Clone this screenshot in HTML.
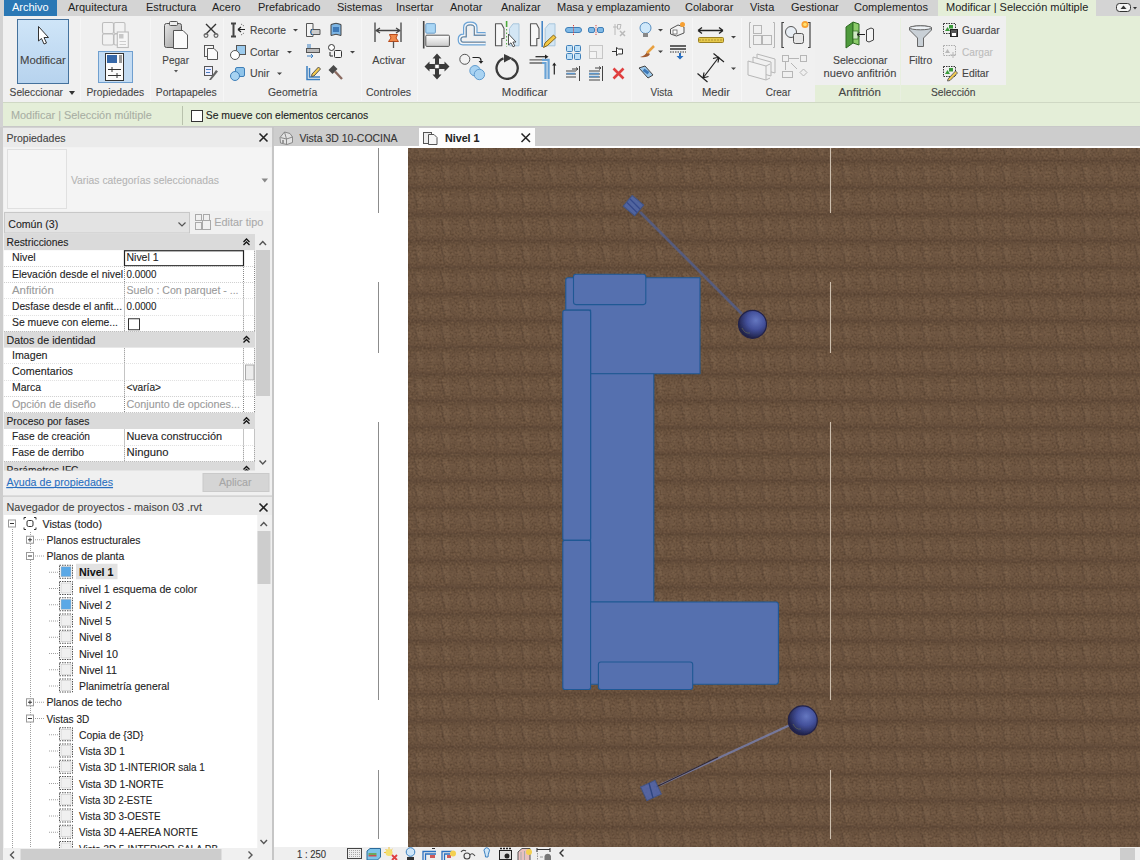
<!DOCTYPE html>
<html><head><meta charset="utf-8">
<style>
*{margin:0;padding:0;box-sizing:border-box}
html,body{width:1140px;height:860px;overflow:hidden;background:#d2d2d2;font-family:"Liberation Sans",sans-serif;font-size:11px;color:#222}
.a{position:absolute}
.t{position:absolute;white-space:nowrap;line-height:13px}
svg{position:absolute;overflow:visible}
</style></head><body>

<!-- ===== TAB BAR ===== -->
<div class="a" style="left:0;top:0;width:1140px;height:16px;background:#d4d4d4"></div>
<div class="a" style="left:4px;top:0;width:53px;height:16px;background:#2a78b5"></div>
<div class="t" style="left:12px;top:1px;color:#fff">Archivo</div>
<div class="t" style="left:68px;top:1px">Arquitectura</div>
<div class="t" style="left:146px;top:1px">Estructura</div>
<div class="t" style="left:212px;top:1px">Acero</div>
<div class="t" style="left:258px;top:1px">Prefabricado</div>
<div class="t" style="left:337px;top:1px">Sistemas</div>
<div class="t" style="left:396px;top:1px">Insertar</div>
<div class="t" style="left:450px;top:1px">Anotar</div>
<div class="t" style="left:501px;top:1px">Analizar</div>
<div class="t" style="left:557px;top:1px">Masa y emplazamiento</div>
<div class="t" style="left:685px;top:1px">Colaborar</div>
<div class="t" style="left:750px;top:1px">Vista</div>
<div class="t" style="left:791px;top:1px">Gestionar</div>
<div class="t" style="left:854px;top:1px">Complementos</div>
<div class="a" style="left:938px;top:0;width:158px;height:17px;background:#e4eed8"></div>
<div class="t" style="left:946px;top:1px">Modificar | Selección múltiple</div>

<!-- ===== RIBBON ===== -->
<div id="ribbon" class="a" style="left:3px;top:16px;width:1137px;height:86px;background:#f0f0f0"></div>
<div class="a" style="left:815px;top:16px;width:325px;height:86px;background:#e4eed8"></div>

<!-- ===== OPTIONS BAR ===== -->
<div class="a" style="left:3px;top:102px;width:1137px;height:25px;background:#e4eed8;border-top:1px solid #cfd8c4;border-bottom:1px solid #c8c8c8"></div>


<!-- ribbon svg -->
<svg class="a" style="left:0;top:0" width="1140" height="128" viewBox="0 0 1140 128" font-family="Liberation Sans" font-size="11">
<defs>
 <linearGradient id="gBtn" x1="0" y1="0" x2="0" y2="1"><stop offset="0" stop-color="#cfe5f8"/><stop offset="1" stop-color="#b7d3ee"/></linearGradient>
 <linearGradient id="gGrey" x1="0" y1="0" x2="0" y2="1"><stop offset="0" stop-color="#ffffff"/><stop offset="1" stop-color="#c8c8c8"/></linearGradient>
 <linearGradient id="gBlue" x1="0" y1="0" x2="0" y2="1"><stop offset="0" stop-color="#bfe0f7"/><stop offset="1" stop-color="#6fb3e0"/></linearGradient>
 <linearGradient id="gGreen" x1="0" y1="0" x2="1" y2="0"><stop offset="0" stop-color="#4f9a3a"/><stop offset="1" stop-color="#8fcf6a"/></linearGradient>
</defs>
<!-- panel bodies for contextual panels -->
<rect x="815" y="16" width="191" height="69" fill="#efefef"/>
<!-- faint panel separators -->
<g stroke="#f6f6f6" stroke-width="1">
 <line x1="80.5" y1="18" x2="80.5" y2="101"/><line x1="150.5" y1="18" x2="150.5" y2="101"/>
 <line x1="223.5" y1="18" x2="223.5" y2="101"/><line x1="361.5" y1="18" x2="361.5" y2="101"/>
 <line x1="417.5" y1="18" x2="417.5" y2="101"/><line x1="631.5" y1="18" x2="631.5" y2="101"/>
 <line x1="692.5" y1="18" x2="692.5" y2="101"/><line x1="741.5" y1="18" x2="741.5" y2="101"/>
</g>
<g stroke="#e8efe0" stroke-width="1"><line x1="900.5" y1="18" x2="900.5" y2="101"/></g>

<!-- ===== Seleccionar ===== -->
<rect x="17.5" y="19.5" width="51" height="64" fill="url(#gBtn)" stroke="#44719c"/>
<path d="M38.5 26.5 L38.5 41 L41.5 38.5 L44 44 L46.5 43 L44 37.5 L48.5 37.5 Z" fill="#fff" stroke="#333" stroke-width="1" stroke-linejoin="round"/>
<text x="20" y="64" fill="#444" textLength="45.8" lengthAdjust="spacingAndGlyphs" stroke="#444" stroke-width="0.1">Modificar</text>
<text x="9.6" y="96" fill="#444" textLength="53.4" lengthAdjust="spacingAndGlyphs" stroke="#444" stroke-width="0.1">Seleccionar</text>
<path d="M69 91 L75 91 L72 95 Z" fill="#333"/>

<!-- ===== Propiedades ===== -->
<g stroke="#bdbdbd" fill="#f2f2f2" stroke-width="1.1">
 <rect x="102.5" y="22.5" width="11" height="11" rx="1.5"/><rect x="114" y="22.5" width="11" height="11" rx="1.5"/>
 <rect x="102.5" y="34" width="11" height="11" rx="1.5"/><rect x="114" y="34" width="11" height="11" rx="1.5"/>
 <rect x="117.3" y="32" width="11" height="15.5" fill="#f6f6f6"/>
 <rect x="119" y="34" width="4.5" height="4.5" fill="#c8c8c8" stroke="none"/>
 <path d="M119.5 41.5 H126 M119.5 44.5 H126" stroke="#c8c8c8" stroke-width="0.9"/>
</g>
<rect x="98.5" y="51.5" width="34" height="31" fill="#c4dcf3" stroke="#6f9fcf"/>
<rect x="105.5" y="53.5" width="18" height="27" fill="#fbfbfb" stroke="#333"/>
<rect x="107" y="55" width="10" height="8" fill="#3567a8"/>
<rect x="119" y="55" width="3" height="8" fill="#999"/>
<path d="M108 69.5 H121 M108 75.5 H121 M112 67 V72 M117 73 V78" stroke="#333" stroke-width="1"/>
<text x="86.5" y="96" fill="#444" textLength="57.7" lengthAdjust="spacingAndGlyphs" stroke="#444" stroke-width="0.1">Propiedades</text>

<!-- ===== Portapapeles ===== -->
<linearGradient id="gClip" x1="0" y1="0" x2="1" y2="1"><stop offset="0" stop-color="#e6e6e6"/><stop offset="1" stop-color="#9a9a9a"/></linearGradient><rect x="164.5" y="23.5" width="17" height="24" rx="2" fill="url(#gClip)" stroke="#555"/>
<rect x="169.5" y="21.5" width="8" height="4" rx="1" fill="#eee" stroke="#555"/>
<path d="M173.5 30.5 H183 L187.5 35 V48.5 H173.5 Z" fill="#fafafa" stroke="#555"/>
<text x="162.3" y="64" fill="#444" textLength="26.7" lengthAdjust="spacingAndGlyphs" stroke="#444" stroke-width="0.1">Pegar</text>
<path d="M174 70 L178 70 L176 72.5 Z" fill="#555"/>
<!-- scissors -->
<path d="M206 24 L216.5 34.5 M216 24 L205.5 34.5" stroke="#333" stroke-width="1.4"/>
<circle cx="206" cy="35.5" r="1.9" fill="none" stroke="#666" stroke-width="1.2"/><circle cx="216" cy="35.5" r="1.9" fill="none" stroke="#666" stroke-width="1.2"/>
<!-- copy -->
<rect x="204.5" y="45.5" width="9" height="11" fill="#f4f4f4" stroke="#555"/>
<path d="M207.5 48.5 H214 L217.5 52 V59.5 H207.5 Z" fill="#fafafa" stroke="#555"/>
<!-- match brush -->
<rect x="204.5" y="66.5" width="8" height="9" fill="#eef" stroke="#555"/>
<path d="M206 69.5 H211 M206 72.5 H210" stroke="#4a7fc0"/>
<path d="M209 80 L216 70 L218 71.5 L211 80 Z" fill="#666"/>
<text x="155.8" y="96" fill="#444" textLength="61" lengthAdjust="spacingAndGlyphs" stroke="#444" stroke-width="0.1">Portapapeles</text>

<!-- ===== Geometria ===== -->
<path d="M231 23.5 H236 M231 36.5 H236 M233.5 23.5 V36.5" stroke="#444" stroke-width="2"/>
<path d="M238 29.5 H245 M238 29.5 L241 27 M238 29.5 L241 32" stroke="#222" stroke-width="1.2" fill="none"/>
<path d="M241 24 L244 26 M241 35 L244 33" stroke="#777" stroke-dasharray="1.5 1"/>
<text x="250" y="34" fill="#444" textLength="36" lengthAdjust="spacingAndGlyphs" stroke="#444" stroke-width="0.1">Recorte</text>
<path d="M293 29 L298 29 L295.5 31.5 Z" fill="#444"/>
<rect x="236.5" y="45.5" width="9" height="9" fill="#9ccbee" stroke="#555"/>
<circle cx="235" cy="55" r="4.5" fill="#fff" stroke="#555"/>
<text x="250" y="55.5" fill="#444" textLength="29" lengthAdjust="spacingAndGlyphs" stroke="#444" stroke-width="0.1">Cortar</text>
<path d="M287 51 L292 51 L289.5 53.5 Z" fill="#444"/>
<rect x="235.5" y="67.5" width="9" height="9" rx="1.5" fill="#8fc4ea" stroke="#3f7fb8"/>
<circle cx="235" cy="76" r="4.5" fill="#a7d3f2" stroke="#3f7fb8"/>
<text x="250" y="77" fill="#444" textLength="19.5" lengthAdjust="spacingAndGlyphs" stroke="#444" stroke-width="0.1">Unir</text>
<path d="M277 72.5 L282 72.5 L279.5 75 Z" fill="#444"/>
<!-- col 2 -->
<path d="M306.5 23.5 H313 V36.5 H306.5 Z" fill="#f4f4f4" stroke="#555"/>
<path d="M311 29.5 H320 V34.5 H311 Z" fill="#ccc" stroke="#555"/><path d="M310 32 L313 29 M310 32 L313 35" stroke="#3b7fc0"/>
<path d="M331 24.5 Q336 22 341 24.5 V35.5 Q336 33 331 35.5 Z" fill="#7cb4e3" stroke="#444"/>
<rect x="333" y="27" width="6" height="5" fill="#3d79b8"/>
<path d="M307 45 H311 M307 47 H311" stroke="#3b7fc0"/>
<rect x="306.5" y="48.5" width="13" height="4" fill="#bbb" stroke="#555"/>
<path d="M307 56 H313 L311 54 M313 56 L311 58" stroke="#3b7fc0" fill="none"/>
<circle cx="331.5" cy="47.5" r="3" fill="#fff" stroke="#333"/>
<rect x="334.5" y="50.5" width="7" height="7" rx="1" fill="#f6f6f6" stroke="#333"/>
<path d="M330 52 V56 H333" stroke="#222" fill="none"/>
<path d="M350 51 L355 51 L352.5 53.5 Z" fill="#444"/>
<path d="M307 66 V79.5 H320 M309.5 68 V77 H320" stroke="#3b7fc0" stroke-width="1.5" fill="none"/>
<path d="M312 74 L318.5 67 L320.5 69 L314 76 L311.5 76.5 Z" fill="#f2c94c" stroke="#555"/>
<path d="M328.5 70 L333.5 65 L337.5 69 L332.5 74 Z" fill="#4a4a4a"/><path d="M335 71.5 L342 79" stroke="#8a6a60" stroke-width="2.4"/>
<text x="268" y="96" fill="#444" textLength="49.2" lengthAdjust="spacingAndGlyphs" stroke="#444" stroke-width="0.1">Geometría</text>

<!-- ===== Controles ===== -->
<path d="M375 22.5 V42 M401 22.5 V42 M376 30.5 H400 M376 30.5 L380 28 M376 30.5 L380 33 M400 30.5 L396 28 M400 30.5 L396 33" stroke="#444" stroke-width="1.3" fill="none"/>
<path d="M389.5 34.5 H397.5 L396 38 L398.5 41.5 H388.5 L391 38 Z" fill="#f08a4b" stroke="#b84a1a"/>
<path d="M393.5 41.5 V48" stroke="#555" stroke-width="1.3"/>
<text x="372.3" y="64" fill="#444" textLength="33" lengthAdjust="spacingAndGlyphs" stroke="#444" stroke-width="0.1">Activar</text>
<text x="366" y="96" fill="#444" textLength="45" lengthAdjust="spacingAndGlyphs" stroke="#444" stroke-width="0.1">Controles</text>

<!-- ===== Modificar big ===== -->
<path d="M423.7 21 V48.5" stroke="#444" stroke-width="1.6"/>
<rect x="425.8" y="23.6" width="9.6" height="9.6" rx="1" fill="#a9d6f5" stroke="#6f9fc8" stroke-width="1"/>
<rect x="425.8" y="35.2" width="23.6" height="11.2" rx="1" fill="url(#gGrey)" stroke="#555" stroke-width="1"/>
<path d="M485.6 43.4 H463 Q459.6 43.4 459.6 39.5 Q459.6 35.6 463.5 35.6 H465 V27.5 Q465 23.6 470.3 23.6 Q475.6 23.6 475.6 27.5 V34 H485.6" stroke="#6aa3d6" stroke-width="4" fill="none"/>
<path d="M485.6 43.4 H463 Q459.6 43.4 459.6 39.5 Q459.6 35.6 463.5 35.6 H465 V27.5 Q465 23.6 470.3 23.6 Q475.6 23.6 475.6 27.5 V34 H485.6" stroke="#f2f6fa" stroke-width="1.6" fill="none"/>
<path d="M485.6 42.3 H463 Q460.7 42.3 460.7 39.5 Q460.7 36.7 463.5 36.7 H466.1 V27.5 Q466.1 24.7 470.3 24.7 Q474.5 24.7 474.5 27.5 V35.1 H485.6" stroke="#777" stroke-width="0.7" fill="none"/>
<!-- mirror pick -->
<path d="M495.5 23.8 H501.5 L504 28.5 V38.5 H501.8 V45.8 H495.5 Z" fill="#f7f7f7" stroke="#555" stroke-width="1.1" stroke-linejoin="round"/>
<path d="M506.6 21 V27" stroke="#4caa3c" stroke-width="1.6"/>
<path d="M506.6 29 V47" stroke="#4caa3c" stroke-width="1" stroke-dasharray="1.5 2"/>
<path d="M519 23.8 H513 L509.5 28.5 V45.8 H519 Z" fill="#d3e6f4" stroke="#a8c6dc" stroke-width="1" stroke-linejoin="round"/>
<path d="M508.5 34 V45 L511 42.8 L513 46.8 L514.8 46 L512.9 42 L516 42 Z" fill="#fff" stroke="#444" stroke-width="0.9" stroke-linejoin="round"/>
<!-- mirror draw -->
<path d="M530.5 23.8 H536.5 L539 28.5 V38.5 H536.8 V45.8 H530.5 Z" fill="#f7f7f7" stroke="#555" stroke-width="1.1" stroke-linejoin="round"/>
<path d="M542.2 21 V47" stroke="#3a7fc4" stroke-width="1.5"/>
<path d="M555 23.8 H549 L545.2 28.5 V45.8 H555 Z" fill="#d3e6f4" stroke="#a8c6dc" stroke-width="1" stroke-linejoin="round"/>
<path d="M543.5 47.5 L545 43 L553.5 35 L556 37.5 L547.5 45.5 Z" fill="#f3c845" stroke="#7a5a10" stroke-width="0.9" stroke-linejoin="round"/>
<!-- move -->
<path d="M437 53.5 L441.5 58.5 H439 V64 H444.5 V61.5 L449.5 66.5 L444.5 71.5 V69 H439 V74.5 H441.5 L437 79.5 L432.5 74.5 H435 V69 H429.5 V71.5 L424.5 66.5 L429.5 61.5 V64 H435 V58.5 H432.5 Z" fill="#3a3a3a"/>
<rect x="434.8" y="64.3" width="4.4" height="4.4" fill="#fff" stroke="#3a3a3a" stroke-width="0.8"/>
<!-- copy -->
<circle cx="464.8" cy="59.3" r="5" fill="#f2f2f2" stroke="#555" stroke-width="1"/>
<path d="M472.5 57.5 H478 Q481 57.5 481 60.5 V62" stroke="#222" stroke-width="1.2" fill="none"/>
<path d="M478.6 61 L481 63.8 L483.4 61 Z" fill="#222"/>
<circle cx="475" cy="70.7" r="5.2" fill="#a9d3f2" stroke="#5e9bcf" stroke-width="1"/>
<circle cx="479.4" cy="74.5" r="5.2" fill="#a9d3f2" stroke="#5e9bcf" stroke-width="1"/>
<!-- rotate -->
<path d="M503.5 58.3 A10.6 10.6 0 1 0 511.5 58.6" stroke="#3a3a3a" stroke-width="2.3" fill="none"/>
<path d="M504 54 L512.5 58 L504 62.5 Z" fill="#3a3a3a"/>
<!-- trim -->
<path d="M529.5 59.9 H542 M529.5 63 H542" stroke="#666" stroke-width="1.4"/>
<path d="M542 59.9 H548.6 V79 M542 63 H545.5 V79" stroke="#6aa3d6" stroke-width="2.2" fill="none"/>
<path d="M535.5 56.7 H546" stroke="#222" stroke-width="1.2"/><path d="M545 54.5 L548.5 56.7 L545 59 Z" fill="#222"/>
<path d="M554.3 64.5 V74.5" stroke="#222" stroke-width="1.2"/><path d="M552.2 65.5 L554.3 62.5 L556.4 65.5 Z" fill="#222"/>
<text x="501.8" y="96" fill="#444" textLength="45.6" lengthAdjust="spacingAndGlyphs" stroke="#444" stroke-width="0.1">Modificar</text>

<!-- ===== Modificar small ===== -->
<g>
 <rect x="565.5" y="27.5" width="16" height="5" rx="2.5" fill="#7fb9e6" stroke="#3f7fb8"/>
 <path d="M573.5 25 V35" stroke="#d04040" stroke-dasharray="1.2 1"/>
 <rect x="588.5" y="27.5" width="6" height="5" rx="1.5" fill="#7fb9e6" stroke="#3f7fb8"/>
 <rect x="597.5" y="27.5" width="6" height="5" rx="1.5" fill="#7fb9e6" stroke="#3f7fb8"/>
 <path d="M596 25 V35" stroke="#d04040" stroke-dasharray="1.2 1"/>
 <g opacity="0.35"><path d="M613 27 H617 M615 24 V35 M617.5 24.5 H621 L620 29 H617.5 Z" stroke="#555" fill="none"/><path d="M620 31 L625 36 M625 31 L620 36" stroke="#555" stroke-width="1.5"/></g>
 <rect x="566.5" y="45.5" width="6" height="6" rx="1" fill="#bfe0f7" stroke="#3f7fb8"/><rect x="574.5" y="45.5" width="6" height="6" rx="1" fill="#bfe0f7" stroke="#3f7fb8"/>
 <rect x="566.5" y="53.5" width="6" height="6" rx="1" fill="#bfe0f7" stroke="#3f7fb8"/><rect x="574.5" y="53.5" width="6" height="6" rx="1" fill="#bfe0f7" stroke="#3f7fb8"/>
 <g opacity="0.4"><rect x="589.5" y="45.5" width="13" height="13" fill="#eee" stroke="#888"/><rect x="589.5" y="51.5" width="7" height="7" fill="#f8f8f8" stroke="#888"/></g>
 <path d="M612 51.5 H616 M616.5 47.5 V55.5 L618.5 54 H622.5 V49 H618.5 Z" stroke="#333" fill="#fff"/>
 <path d="M566 71 H576 M566 74 H576 M566 77 H576 M572 69 H578 M576 67.5 L578 69 L576 70.5 M579.5 66 V81" stroke="#444" fill="none"/>
 <path d="M566.5 73.5 H575" stroke="#5a93c8" stroke-width="1.5"/>
 <path d="M589 71 H600 M589 74 H600 M589 77 H600 M589 80 H600 M595 68 H601 M599 66.5 L601 68 L599 69.5 M602.5 66 V81" stroke="#444" fill="none"/>
 <path d="M589 73.5 H599 M589 76.5 H599" stroke="#5a93c8" stroke-width="1.3"/>
 <path d="M613.5 68.5 L623.5 78.5 M623.5 68.5 L613.5 78.5" stroke="#e04040" stroke-width="2.6"/>
</g>

<!-- ===== Vista ===== -->
<circle cx="645.5" cy="28" r="5.5" fill="#cfe8fa" stroke="#5a8fc0"/>
<rect x="643" y="33" width="5" height="4" fill="#888"/>
<path d="M658 29 L663 29 L660.5 31.5 Z" fill="#444"/>
<path d="M670.5 29 L678 25 L684 27 V33 L676.5 36 L670.5 34 Z" fill="#f2f2f2" stroke="#555"/>
<rect x="673" y="30" width="4" height="4" fill="#fff" stroke="#555" stroke-width="0.7"/>
<circle cx="682.5" cy="24.5" r="2.5" fill="#f7a032"/>
<path d="M640 57 Q645 56 647 52 L650 54 Q648 58 640 57 Z" fill="#a05a30"/>
<path d="M647 53 L654 46" stroke="#e8a040" stroke-width="2.5"/>
<path d="M658 50.5 L663 50.5 L660.5 53 Z" fill="#444"/>
<path d="M670 46 H686 M670 49 H686" stroke="#333" stroke-width="1.3"/><path d="M670 52 H686" stroke="#333" stroke-dasharray="1.5 1"/>
<path d="M679 53 V56 L676.5 56 L680 59.5 L683.5 56 H681 V53 Z" fill="#2a6fc0"/>
<path d="M639 68 L645 66 L653 75 L648 78 Z" fill="#9cc9ec" stroke="#444"/>
<rect x="643" y="70" width="6" height="3" fill="#3d79b8" transform="rotate(35 646 71.5)"/>
<text x="650.6" y="96" fill="#444" textLength="21.9" lengthAdjust="spacingAndGlyphs" stroke="#444" stroke-width="0.1">Vista</text>

<!-- ===== Medir ===== -->
<path d="M698 30.5 H723 M698 30.5 L702 27.5 M698 30.5 L702 33.5 M723 30.5 L719 27.5 M723 30.5 L719 33.5" stroke="#222" stroke-width="1.3" fill="none"/>
<rect x="698.5" y="37.5" width="25" height="5" rx="1" fill="#e6c84a" stroke="#9a8020"/>
<path d="M700 39 V41 M703 39 V41 M706 39 V41 M709 39 V41 M712 39 V41 M715 39 V41 M718 39 V41 M721 39 V41" stroke="#8a7020" stroke-width="0.6"/>
<path d="M731 36 L736 36 L733.5 38.5 Z" fill="#444"/>
<path d="M703 78 L719 57 M697.5 73.5 L707.5 82 M713.5 53.5 L724 62 M703 78 L704 72.5 M703 78 L708.5 76.5 M719 57 L713 58.5 M719 57 L718 62.5" stroke="#222" stroke-width="1.2" fill="none"/>
<path d="M731 67.5 L736 67.5 L733.5 70 Z" fill="#444"/>
<text x="702" y="96" fill="#444" textLength="28" lengthAdjust="spacingAndGlyphs" stroke="#444" stroke-width="0.1">Medir</text>

<!-- ===== Crear ===== -->
<g opacity="0.55" stroke="#888" fill="#f0f0f0">
 <path d="M751 22.5 H749.5 V47.5 H751 M773 22.5 H774.5 V47.5 H773" fill="none"/>
 <rect x="753.5" y="25.5" width="8" height="8"/><rect x="753.5" y="35.5" width="8" height="9"/><rect x="762.5" y="35.5" width="9" height="9"/>
 <path d="M757 54 L775 59 V73 L757 68 Z" fill="#f2f2f2"/>
 <path d="M753 57 L771 62 V76 L753 71 Z" fill="#f2f2f2"/>
 <path d="M748 61 L766 66 V80 L748 75 Z" fill="#f4f4f4"/>
 <path d="M766 66 L770 64 M766 80 L770 78" fill="none"/>
 <rect x="782.5" y="55.5" width="6" height="6"/><rect x="800.5" y="55.5" width="6" height="6"/><rect x="782.5" y="71.5" width="10" height="6"/>
 <path d="M789 58.5 H799 M785.5 62 V70 M791 63 L797 69" fill="none"/><path d="M803.5 69 L807 72.5 L803.5 76 L800 72.5 Z"/>
</g>
<path d="M784 22.5 H782 V47.5 H784 M808 22.5 H810 V47.5 H808" stroke="#444" stroke-width="1.2" fill="none"/>
<circle cx="791" cy="32" r="5.5" fill="#e8eef4" stroke="#555"/>
<rect x="793.5" y="33.5" width="10" height="10" rx="2" fill="#e6e6e6" stroke="#555"/>
<circle cx="805" cy="24.5" r="3.5" fill="#f7a032"/><circle cx="805" cy="24.5" r="1.8" fill="#ffe070"/>
<text x="765.7" y="96" fill="#444" textLength="25.1" lengthAdjust="spacingAndGlyphs" stroke="#444" stroke-width="0.1">Crear</text>

<!-- ===== Anfitrion ===== -->
<path d="M846 27 L853 22 V43 L846 48 Z" fill="#4e9a3c" stroke="#2f6a22"/>
<path d="M853 22 L859 24 V45 L853 43 Z" fill="#8ccc6a" stroke="#2f6a22"/>
<rect x="853" y="31" width="5" height="8" fill="#cfe8c4" stroke="#2f6a22" stroke-width="0.7"/>
<path d="M857 34.5 H865 M857 34.5 L859.5 32.5 M857 34.5 L859.5 36.5" stroke="#222" fill="none"/>
<path d="M866.5 30 L871 28 L873.5 29 V40 L869 42 L866.5 41 Z" fill="#f4f4f4" stroke="#444"/>
<text x="833" y="64" fill="#444" textLength="54.6" lengthAdjust="spacingAndGlyphs" stroke="#444" stroke-width="0.1">Seleccionar</text>
<text x="823.6" y="77" fill="#444" textLength="72.8" lengthAdjust="spacingAndGlyphs" stroke="#444" stroke-width="0.1">nuevo anfitrión</text>
<text x="838.5" y="96" fill="#444" textLength="42.5" lengthAdjust="spacingAndGlyphs" stroke="#444" stroke-width="0.1">Anfitrión</text>

<!-- ===== Seleccion ===== -->
<path d="M909.5 27.5 Q920.5 24 931.5 27.5 V30 L923.5 38 V46.5 H917.5 V38 L909.5 30 Z" fill="#c9d0d6" stroke="#666"/>
<ellipse cx="920.5" cy="27.8" rx="11" ry="2" fill="#eef2f6" stroke="#666"/>
<text x="909" y="64" fill="#444" textLength="23.2" lengthAdjust="spacingAndGlyphs" stroke="#444" stroke-width="0.1">Filtro</text>
<g>
 <rect x="943.5" y="23.5" width="12" height="10" fill="none" stroke="#333" stroke-dasharray="1.5 1"/>
 <path d="M945 31 L947.5 27 L950 31 Z" fill="#3a9a3a"/><rect x="949" y="25" width="4" height="3.5" fill="#3a9a3a"/>
 <rect x="950.5" y="29.5" width="7" height="7" fill="#555" stroke="#222"/><rect x="952" y="33" width="4" height="3" fill="#fff"/>
 <text x="962" y="34" fill="#444" textLength="37.6" lengthAdjust="spacingAndGlyphs" stroke="#444" stroke-width="0.1">Guardar</text>
 <g opacity="0.35"><rect x="943.5" y="45.5" width="12" height="10" fill="none" stroke="#333" stroke-dasharray="1.5 1"/><path d="M945 53 L947.5 49 L950 53 Z" fill="#555"/><path d="M953 52 V58 M950 55 H956" stroke="#555"/></g>
 <text x="962" y="55.5" fill="#bcbcbc" textLength="31" lengthAdjust="spacingAndGlyphs" stroke="#bcbcbc" stroke-width="0.1">Cargar</text>
 <rect x="943.5" y="66.5" width="12" height="10" fill="none" stroke="#333" stroke-dasharray="1.5 1"/>
 <path d="M945 74 L947.5 70 L950 74 Z" fill="#3a9a3a"/><rect x="949" y="68" width="4" height="3.5" fill="#3a9a3a"/>
 <path d="M948 79 L955.5 71 L957.5 73 L950 80.5 L947.5 81 Z" fill="#f2c94c" stroke="#666"/>
 <text x="962" y="77" fill="#444" textLength="27" lengthAdjust="spacingAndGlyphs" stroke="#444" stroke-width="0.1">Editar</text>
</g>
<text x="931" y="96" fill="#444" textLength="44.5" lengthAdjust="spacingAndGlyphs" stroke="#444" stroke-width="0.1">Selección</text>

<!-- right corner icon -->
<rect x="1116.5" y="3.5" width="14" height="8" rx="3" fill="#f4f4f4" stroke="#333"/>
<path d="M1120.5 9 L1123.5 5.5 L1126.5 9 Z" fill="#333"/>
<path d="M1133 7 L1137 7 L1135 9.5 Z" fill="#333"/>

<!-- ===== Options bar ===== -->
<text x="11" y="119" fill="#a9aea4" textLength="140.7" lengthAdjust="spacingAndGlyphs" stroke="#a9aea4" stroke-width="0.1">Modificar | Selección múltiple</text>
<path d="M182.5 106 V125" stroke="#b9c2ad"/>
<rect x="191.5" y="110.5" width="11" height="11" fill="#fff" stroke="#333"/>
<text x="205.7" y="119" fill="#222" textLength="162.6" lengthAdjust="spacingAndGlyphs" stroke="#222" stroke-width="0.1">Se mueve con elementos cercanos</text>
</svg>

<!-- ===== LEFT PANELS ===== -->
<div id="props" class="a" style="left:3px;top:128px;width:269px;height:368px;background:#f0f0f0"></div>
<div id="browser" class="a" style="left:3px;top:497px;width:269px;height:363px;background:#f0f0f0"></div>

<div class="a" style="left:0;top:127px;width:3px;height:733px;background:#cdcdcd"></div>
<div class="a" style="left:272px;top:127px;width:2px;height:733px;background:#c6c6c6"></div>
<svg class="a" style="left:0;top:0" width="274" height="860" viewBox="0 0 274 860" font-family="Liberation Sans" font-size="11">
<!-- props header -->
<rect x="3" y="128" width="269" height="19" fill="#ebebeb"/>
<text x="6.5" y="142" fill="#444" textLength="59" lengthAdjust="spacingAndGlyphs" stroke="#444" stroke-width="0.1">Propiedades</text>
<path d="M259.5 133.5 L267.5 141.5 M267.5 133.5 L259.5 141.5" stroke="#222" stroke-width="1.6"/>
<rect x="4" y="147.5" width="267" height="63.5" fill="#f4f4f4"/>
<rect x="7.5" y="149.5" width="59" height="59" fill="#f5f5f5" stroke="#e0e0e0"/>
<text x="71" y="184" fill="#b4b4b4" textLength="148" lengthAdjust="spacingAndGlyphs" stroke="#b4b4b4" stroke-width="0.1">Varias categorías seleccionadas</text>
<path d="M261.5 178.5 L268 178.5 L264.75 182.5 Z" fill="#888"/>
<rect x="4.5" y="212.5" width="185" height="20.5" fill="#e3e3e3" stroke="#c8c8c8"/>
<text x="8.25" y="227.5" fill="#222" textLength="50" lengthAdjust="spacingAndGlyphs" stroke="#222" stroke-width="0.1">Común (3)</text>
<path d="M178.5 222.5 L182 226 L185.5 222.5" stroke="#555" stroke-width="1.2" fill="none"/>
<g opacity="0.45" stroke="#555" fill="none"><rect x="195.5" y="214.5" width="6" height="6"/><rect x="195.5" y="222.5" width="6" height="7"/><rect x="203.5" y="214.5" width="6" height="6"/><rect x="202.5" y="220.5" width="8" height="9" fill="#f6f6f6"/></g>
<text x="214.3" y="225.8" fill="#aaaaaa" textLength="49" lengthAdjust="spacingAndGlyphs" stroke="#aaaaaa" stroke-width="0.1">Editar tipo</text>
<!-- grid -->
<rect x="4" y="234.00" width="251" height="16.25" fill="#dadada"/>
<text x="6.5" y="246.00" fill="#222" textLength="62" lengthAdjust="spacingAndGlyphs" stroke="#222" stroke-width="0.1">Restricciones</text>
<path d="M243.5 242.00 L246.5 239.00 L249.5 242.00 M243.5 245.00 L246.5 242.00 L249.5 245.00" stroke="#111" stroke-width="1.3" fill="none"/>
<rect x="4" y="250.25" width="251" height="16.25" fill="#fff"/>
<text x="12" y="261.25" fill="#222" textLength="23.75" lengthAdjust="spacingAndGlyphs" stroke="#222" stroke-width="0.1">Nivel</text>
<text x="126.5" y="261.25" fill="#222" textLength="32" lengthAdjust="spacingAndGlyphs" stroke="#222" stroke-width="0.1">Nivel 1</text>
<path d="M4 266.25 H255 M124.5 250.25 V266.50 M243.5 250.25 V266.50 M254.5 250.25 V266.50" stroke="#888" stroke-width="1" stroke-dasharray="1 1" fill="none" transform="translate(0,0.5)"/>
<rect x="124.5" y="250.75" width="119" height="15" fill="none" stroke="#222" stroke-width="1.2"/>
<rect x="4" y="266.50" width="251" height="16.25" fill="#fff"/>
<text x="12" y="277.50" fill="#222" textLength="111" lengthAdjust="spacingAndGlyphs" stroke="#222" stroke-width="0.1">Elevación desde el nivel</text>
<text x="126.5" y="277.50" fill="#222" textLength="30" lengthAdjust="spacingAndGlyphs" stroke="#222" stroke-width="0.1">0.0000</text>
<path d="M4 282.50 H255 M124.5 266.50 V282.75 M243.5 266.50 V282.75 M254.5 266.50 V282.75" stroke="#888" stroke-width="1" stroke-dasharray="1 1" fill="none" transform="translate(0,0.5)"/>
<rect x="4" y="282.75" width="251" height="16.25" fill="#fff"/>
<text x="12" y="293.75" fill="#9a9a9a" textLength="41.75" lengthAdjust="spacingAndGlyphs" stroke="#9a9a9a" stroke-width="0.1">Anfitrión</text>
<text x="126.5" y="293.75" fill="#9a9a9a" textLength="112" lengthAdjust="spacingAndGlyphs" stroke="#9a9a9a" stroke-width="0.1">Suelo : Con parquet - ...</text>
<path d="M4 298.75 H255 M124.5 282.75 V299.00 M243.5 282.75 V299.00 M254.5 282.75 V299.00" stroke="#888" stroke-width="1" stroke-dasharray="1 1" fill="none" transform="translate(0,0.5)"/>
<rect x="4" y="299.00" width="251" height="16.25" fill="#fff"/>
<text x="12" y="310.00" fill="#222" textLength="110" lengthAdjust="spacingAndGlyphs" stroke="#222" stroke-width="0.1">Desfase desde el anfit...</text>
<text x="126.5" y="310.00" fill="#222" textLength="30" lengthAdjust="spacingAndGlyphs" stroke="#222" stroke-width="0.1">0.0000</text>
<path d="M4 315.00 H255 M124.5 299.00 V315.25 M243.5 299.00 V315.25 M254.5 299.00 V315.25" stroke="#888" stroke-width="1" stroke-dasharray="1 1" fill="none" transform="translate(0,0.5)"/>
<rect x="4" y="315.25" width="251" height="16.25" fill="#fff"/>
<text x="12" y="326.25" fill="#222" textLength="106" lengthAdjust="spacingAndGlyphs" stroke="#222" stroke-width="0.1">Se mueve con eleme...</text>
<path d="M4 331.25 H255 M124.5 315.25 V331.50 M243.5 315.25 V331.50 M254.5 315.25 V331.50" stroke="#888" stroke-width="1" stroke-dasharray="1 1" fill="none" transform="translate(0,0.5)"/>
<rect x="128.5" y="318.75" width="11" height="11" fill="#fff" stroke="#333"/>
<rect x="4" y="331.50" width="251" height="16.25" fill="#dadada"/>
<text x="6.5" y="343.50" fill="#222" textLength="89" lengthAdjust="spacingAndGlyphs" stroke="#222" stroke-width="0.1">Datos de identidad</text>
<path d="M243.5 339.50 L246.5 336.50 L249.5 339.50 M243.5 342.50 L246.5 339.50 L249.5 342.50" stroke="#111" stroke-width="1.3" fill="none"/>
<rect x="4" y="347.75" width="251" height="16.25" fill="#fff"/>
<text x="12" y="358.75" fill="#222" textLength="35.5" lengthAdjust="spacingAndGlyphs" stroke="#222" stroke-width="0.1">Imagen</text>
<path d="M4 363.75 H255 M124.5 347.75 V364.00 M243.5 347.75 V364.00 M254.5 347.75 V364.00" stroke="#888" stroke-width="1" stroke-dasharray="1 1" fill="none" transform="translate(0,0.5)"/>
<rect x="4" y="364.00" width="251" height="16.25" fill="#fff"/>
<text x="12" y="375.00" fill="#222" textLength="61" lengthAdjust="spacingAndGlyphs" stroke="#222" stroke-width="0.1">Comentarios</text>
<path d="M4 380.00 H255 M124.5 364.00 V380.25 M243.5 364.00 V380.25 M254.5 364.00 V380.25" stroke="#888" stroke-width="1" stroke-dasharray="1 1" fill="none" transform="translate(0,0.5)"/>
<rect x="245.5" y="365.00" width="8.5" height="15" fill="#ececec" stroke="#aaa"/>
<rect x="4" y="380.25" width="251" height="16.25" fill="#fff"/>
<text x="12" y="391.25" fill="#222" textLength="29" lengthAdjust="spacingAndGlyphs" stroke="#222" stroke-width="0.1">Marca</text>
<text x="126.5" y="391.25" fill="#222" textLength="34.5" lengthAdjust="spacingAndGlyphs" stroke="#222" stroke-width="0.1">&lt;varía&gt;</text>
<path d="M4 396.25 H255 M124.5 380.25 V396.50 M243.5 380.25 V396.50 M254.5 380.25 V396.50" stroke="#888" stroke-width="1" stroke-dasharray="1 1" fill="none" transform="translate(0,0.5)"/>
<rect x="4" y="396.50" width="251" height="16.25" fill="#fff"/>
<text x="12" y="407.50" fill="#9a9a9a" textLength="83.75" lengthAdjust="spacingAndGlyphs" stroke="#9a9a9a" stroke-width="0.1">Opción de diseño</text>
<text x="126.5" y="407.50" fill="#9a9a9a" textLength="113.5" lengthAdjust="spacingAndGlyphs" stroke="#9a9a9a" stroke-width="0.1">Conjunto de opciones...</text>
<path d="M4 412.50 H255 M124.5 396.50 V412.75 M243.5 396.50 V412.75 M254.5 396.50 V412.75" stroke="#888" stroke-width="1" stroke-dasharray="1 1" fill="none" transform="translate(0,0.5)"/>
<rect x="4" y="412.75" width="251" height="16.25" fill="#dadada"/>
<text x="6.5" y="424.75" fill="#222" textLength="83" lengthAdjust="spacingAndGlyphs" stroke="#222" stroke-width="0.1">Proceso por fases</text>
<path d="M243.5 420.75 L246.5 417.75 L249.5 420.75 M243.5 423.75 L246.5 420.75 L249.5 423.75" stroke="#111" stroke-width="1.3" fill="none"/>
<rect x="4" y="429.00" width="251" height="16.25" fill="#fff"/>
<text x="12" y="440.00" fill="#222" textLength="78" lengthAdjust="spacingAndGlyphs" stroke="#222" stroke-width="0.1">Fase de creación</text>
<text x="126.5" y="440.00" fill="#222" textLength="95.5" lengthAdjust="spacingAndGlyphs" stroke="#222" stroke-width="0.1">Nueva construcción</text>
<path d="M4 445.00 H255 M124.5 429.00 V445.25 M243.5 429.00 V445.25 M254.5 429.00 V445.25" stroke="#888" stroke-width="1" stroke-dasharray="1 1" fill="none" transform="translate(0,0.5)"/>
<rect x="4" y="445.25" width="251" height="16.25" fill="#fff"/>
<text x="12" y="456.25" fill="#222" textLength="72" lengthAdjust="spacingAndGlyphs" stroke="#222" stroke-width="0.1">Fase de derribo</text>
<text x="126.5" y="456.25" fill="#222" textLength="42" lengthAdjust="spacingAndGlyphs" stroke="#222" stroke-width="0.1">Ninguno</text>
<path d="M4 461.25 H255 M124.5 445.25 V461.50 M243.5 445.25 V461.50 M254.5 445.25 V461.50" stroke="#888" stroke-width="1" stroke-dasharray="1 1" fill="none" transform="translate(0,0.5)"/>
<rect x="4" y="461.50" width="251" height="16.25" fill="#dadada"/>
<text x="6.5" y="473.50" fill="#222" textLength="72" lengthAdjust="spacingAndGlyphs" stroke="#222" stroke-width="0.1">Parámetros IFC</text>
<path d="M243.5 469.50 L246.5 466.50 L249.5 469.50 M243.5 472.50 L246.5 469.50 L249.5 472.50" stroke="#111" stroke-width="1.3" fill="none"/>
<rect x="4" y="470.5" width="268" height="26" fill="#f0f0f0"/>
<!-- props scrollbar -->
<rect x="255.5" y="234" width="15" height="236" fill="#f0f0f0"/>
<path d="M259.5 245 L262.75 241.5 L266 245" stroke="#555" stroke-width="1.4" fill="none"/>
<rect x="256" y="250" width="14" height="146" fill="#cdcdcd"/>
<path d="M259.5 460.5 L262.75 464 L266 460.5" stroke="#555" stroke-width="1.4" fill="none"/>
<text x="6.5" y="486" fill="#2a6fc0" text-decoration="underline" textLength="106.5" lengthAdjust="spacingAndGlyphs" stroke="#2a6fc0" stroke-width="0.1">Ayuda de propiedades</text>
<path d="M6.5 487.5 H113" stroke="#2a6fc0" stroke-width="1"/>
<rect x="203" y="473.5" width="66" height="18" fill="#d5d5d5" stroke="#cacaca"/>
<text x="219" y="486" fill="#a6a6a6" textLength="32.5" lengthAdjust="spacingAndGlyphs" stroke="#a6a6a6" stroke-width="0.1">Aplicar</text>
<path d="M3 496 H272" stroke="#c8c8c8"/>
<!-- browser -->
<rect x="3" y="497" width="269" height="18" fill="#ebebeb"/>
<text x="6.5" y="511" fill="#444" textLength="195.5" lengthAdjust="spacingAndGlyphs" stroke="#444" stroke-width="0.1">Navegador de proyectos - maison 03 .rvt</text>
<path d="M259.5 503.5 L267.5 511.5 M267.5 503.5 L259.5 511.5" stroke="#222" stroke-width="1.6"/>
<rect x="4" y="515" width="253.5" height="333" fill="#fff"/>
<rect x="257.5" y="515" width="13" height="333" fill="#f0f0f0"/>
<path d="M260.5 526 L263.75 522.5 L267 526" stroke="#555" stroke-width="1.4" fill="none"/>
<rect x="257.5" y="531" width="13" height="53" fill="#cdcdcd"/>
<path d="M260.5 840 L263.75 843.5 L267 840" stroke="#555" stroke-width="1.4" fill="none"/>
<svg x="0" y="515" width="257" height="333" viewBox="0 515 257 333" overflow="hidden">
<path d="M12.5 529 V848 M30.5 532 V848" stroke="#a0a0a0" stroke-dasharray="1 1" fill="none"/>
<rect x="8.5" y="520.00" width="7" height="7" fill="#fff" stroke="#999"/><path d="M10 523.50 H14" stroke="#333"/>
<path d="M26 517.50 H24 V519.50 M34 517.50 H36 V519.50 M24 527.50 V529.50 H26 M36 527.50 V529.50 H34" stroke="#333" fill="none"/><rect x="27" y="520.50" width="6" height="6" rx="1.5" fill="#fff" stroke="#333"/>
<text x="42.5" y="527.50" fill="#222" textLength="59.5" lengthAdjust="spacingAndGlyphs" stroke="#222" stroke-width="0.1">Vistas (todo)</text>
<path d="M35 539.75 H44" stroke="#a0a0a0" stroke-dasharray="1 1"/>
<rect x="26.5" y="536.25" width="7" height="7" fill="#fff" stroke="#999"/><path d="M28 539.75 H32" stroke="#333"/>
<path d="M30 537.75 V541.75" stroke="#333"/>
<text x="46.5" y="543.75" fill="#222" textLength="94" lengthAdjust="spacingAndGlyphs" stroke="#222" stroke-width="0.1">Planos estructurales</text>
<path d="M35 556.00 H44" stroke="#a0a0a0" stroke-dasharray="1 1"/>
<rect x="26.5" y="552.50" width="7" height="7" fill="#fff" stroke="#999"/><path d="M28 556.00 H32" stroke="#333"/>
<text x="46.5" y="560.00" fill="#222" textLength="77.75" lengthAdjust="spacingAndGlyphs" stroke="#222" stroke-width="0.1">Planos de planta</text>
<path d="M49 572.25 H59" stroke="#a0a0a0" stroke-dasharray="1 1"/>
<rect x="59.5" y="565.25" width="13" height="13" fill="none" stroke="#555" stroke-dasharray="1.5 1"/><rect x="61" y="566.75" width="10" height="10" fill="#5aa8e6" stroke="#bbb" stroke-width="0.5"/>
<rect x="76" y="563.75" width="41.5" height="15.5" fill="#e2e2e2"/>
<text x="79" y="576.25" fill="#111" font-weight="bold" textLength="34.5" lengthAdjust="spacingAndGlyphs" stroke="#111" stroke-width="0.1">Nivel 1</text>
<path d="M49 588.50 H59" stroke="#a0a0a0" stroke-dasharray="1 1"/>
<rect x="59.5" y="581.50" width="13" height="13" fill="none" stroke="#555" stroke-dasharray="1.5 1"/><rect x="61" y="583.00" width="10" height="10" fill="#f0f0f0" stroke="#bbb" stroke-width="0.5"/>
<text x="79" y="592.50" fill="#222" textLength="118.25" lengthAdjust="spacingAndGlyphs" stroke="#222" stroke-width="0.1">nivel 1 esquema de color</text>
<path d="M49 604.75 H59" stroke="#a0a0a0" stroke-dasharray="1 1"/>
<rect x="59.5" y="597.75" width="13" height="13" fill="none" stroke="#555" stroke-dasharray="1.5 1"/><rect x="61" y="599.25" width="10" height="10" fill="#5aa8e6" stroke="#bbb" stroke-width="0.5"/>
<text x="79" y="608.75" fill="#222" textLength="32.25" lengthAdjust="spacingAndGlyphs" stroke="#222" stroke-width="0.1">Nivel 2</text>
<path d="M49 621.00 H59" stroke="#a0a0a0" stroke-dasharray="1 1"/>
<rect x="59.5" y="614.00" width="13" height="13" fill="none" stroke="#555" stroke-dasharray="1.5 1"/><rect x="61" y="615.50" width="10" height="10" fill="#f0f0f0" stroke="#bbb" stroke-width="0.5"/>
<text x="79" y="625.00" fill="#222" textLength="32.25" lengthAdjust="spacingAndGlyphs" stroke="#222" stroke-width="0.1">Nivel 5</text>
<path d="M49 637.25 H59" stroke="#a0a0a0" stroke-dasharray="1 1"/>
<rect x="59.5" y="630.25" width="13" height="13" fill="none" stroke="#555" stroke-dasharray="1.5 1"/><rect x="61" y="631.75" width="10" height="10" fill="#f0f0f0" stroke="#bbb" stroke-width="0.5"/>
<text x="79" y="641.25" fill="#222" textLength="32.25" lengthAdjust="spacingAndGlyphs" stroke="#222" stroke-width="0.1">Nivel 8</text>
<path d="M49 653.50 H59" stroke="#a0a0a0" stroke-dasharray="1 1"/>
<rect x="59.5" y="646.50" width="13" height="13" fill="none" stroke="#555" stroke-dasharray="1.5 1"/><rect x="61" y="648.00" width="10" height="10" fill="#f0f0f0" stroke="#bbb" stroke-width="0.5"/>
<text x="79" y="657.50" fill="#222" textLength="39" lengthAdjust="spacingAndGlyphs" stroke="#222" stroke-width="0.1">Nivel 10</text>
<path d="M49 669.75 H59" stroke="#a0a0a0" stroke-dasharray="1 1"/>
<rect x="59.5" y="662.75" width="13" height="13" fill="none" stroke="#555" stroke-dasharray="1.5 1"/><rect x="61" y="664.25" width="10" height="10" fill="#f0f0f0" stroke="#bbb" stroke-width="0.5"/>
<text x="79" y="673.75" fill="#222" textLength="38" lengthAdjust="spacingAndGlyphs" stroke="#222" stroke-width="0.1">Nivel 11</text>
<path d="M49 686.00 H59" stroke="#a0a0a0" stroke-dasharray="1 1"/>
<rect x="59.5" y="679.00" width="13" height="13" fill="none" stroke="#555" stroke-dasharray="1.5 1"/><rect x="61" y="680.50" width="10" height="10" fill="#f0f0f0" stroke="#bbb" stroke-width="0.5"/>
<text x="79" y="690.00" fill="#222" textLength="90.25" lengthAdjust="spacingAndGlyphs" stroke="#222" stroke-width="0.1">Planimetría general</text>
<path d="M35 702.25 H44" stroke="#a0a0a0" stroke-dasharray="1 1"/>
<rect x="26.5" y="698.75" width="7" height="7" fill="#fff" stroke="#999"/><path d="M28 702.25 H32" stroke="#333"/>
<path d="M30 700.25 V704.25" stroke="#333"/>
<text x="46.5" y="706.25" fill="#222" textLength="75.25" lengthAdjust="spacingAndGlyphs" stroke="#222" stroke-width="0.1">Planos de techo</text>
<path d="M35 718.50 H44" stroke="#a0a0a0" stroke-dasharray="1 1"/>
<rect x="26.5" y="715.00" width="7" height="7" fill="#fff" stroke="#999"/><path d="M28 718.50 H32" stroke="#333"/>
<text x="46.5" y="722.50" fill="#222" textLength="42.75" lengthAdjust="spacingAndGlyphs" stroke="#222" stroke-width="0.1">Vistas 3D</text>
<path d="M49 734.75 H59" stroke="#a0a0a0" stroke-dasharray="1 1"/>
<rect x="59.5" y="727.75" width="13" height="13" fill="none" stroke="#555" stroke-dasharray="1.5 1"/><rect x="61" y="729.25" width="10" height="10" fill="#f0f0f0" stroke="#bbb" stroke-width="0.5"/>
<text x="79" y="738.75" fill="#222" textLength="64.5" lengthAdjust="spacingAndGlyphs" stroke="#222" stroke-width="0.1">Copia de {3D}</text>
<path d="M49 751.00 H59" stroke="#a0a0a0" stroke-dasharray="1 1"/>
<rect x="59.5" y="744.00" width="13" height="13" fill="none" stroke="#555" stroke-dasharray="1.5 1"/><rect x="61" y="745.50" width="10" height="10" fill="#f0f0f0" stroke="#bbb" stroke-width="0.5"/>
<text x="79" y="755.00" fill="#222" textLength="45.75" lengthAdjust="spacingAndGlyphs" stroke="#222" stroke-width="0.1">Vista 3D 1</text>
<path d="M49 767.25 H59" stroke="#a0a0a0" stroke-dasharray="1 1"/>
<rect x="59.5" y="760.25" width="13" height="13" fill="none" stroke="#555" stroke-dasharray="1.5 1"/><rect x="61" y="761.75" width="10" height="10" fill="#f0f0f0" stroke="#bbb" stroke-width="0.5"/>
<text x="79" y="771.25" fill="#222" textLength="125.75" lengthAdjust="spacingAndGlyphs" stroke="#222" stroke-width="0.1">Vista 3D 1-INTERIOR sala 1</text>
<path d="M49 783.50 H59" stroke="#a0a0a0" stroke-dasharray="1 1"/>
<rect x="59.5" y="776.50" width="13" height="13" fill="none" stroke="#555" stroke-dasharray="1.5 1"/><rect x="61" y="778.00" width="10" height="10" fill="#f0f0f0" stroke="#bbb" stroke-width="0.5"/>
<text x="79" y="787.50" fill="#222" textLength="84.5" lengthAdjust="spacingAndGlyphs" stroke="#222" stroke-width="0.1">Vista 3D 1-NORTE</text>
<path d="M49 799.75 H59" stroke="#a0a0a0" stroke-dasharray="1 1"/>
<rect x="59.5" y="792.75" width="13" height="13" fill="none" stroke="#555" stroke-dasharray="1.5 1"/><rect x="61" y="794.25" width="10" height="10" fill="#f0f0f0" stroke="#bbb" stroke-width="0.5"/>
<text x="79" y="803.75" fill="#222" textLength="73.25" lengthAdjust="spacingAndGlyphs" stroke="#222" stroke-width="0.1">Vista 3D 2-ESTE</text>
<path d="M49 816.00 H59" stroke="#a0a0a0" stroke-dasharray="1 1"/>
<rect x="59.5" y="809.00" width="13" height="13" fill="none" stroke="#555" stroke-dasharray="1.5 1"/><rect x="61" y="810.50" width="10" height="10" fill="#f0f0f0" stroke="#bbb" stroke-width="0.5"/>
<text x="79" y="820.00" fill="#222" textLength="81.5" lengthAdjust="spacingAndGlyphs" stroke="#222" stroke-width="0.1">Vista 3D 3-OESTE</text>
<path d="M49 832.25 H59" stroke="#a0a0a0" stroke-dasharray="1 1"/>
<rect x="59.5" y="825.25" width="13" height="13" fill="none" stroke="#555" stroke-dasharray="1.5 1"/><rect x="61" y="826.75" width="10" height="10" fill="#f0f0f0" stroke="#bbb" stroke-width="0.5"/>
<text x="79" y="836.25" fill="#222" textLength="118.75" lengthAdjust="spacingAndGlyphs" stroke="#222" stroke-width="0.1">Vista 3D 4-AEREA NORTE</text>
<path d="M49 848.50 H59" stroke="#a0a0a0" stroke-dasharray="1 1"/>
<rect x="59.5" y="841.50" width="13" height="13" fill="none" stroke="#555" stroke-dasharray="1.5 1"/><rect x="61" y="843.00" width="10" height="10" fill="#f0f0f0" stroke="#bbb" stroke-width="0.5"/>
<text x="79" y="852.50" fill="#222" textLength="139" lengthAdjust="spacingAndGlyphs" stroke="#222" stroke-width="0.1">Vista 3D 5-INTERIOR SALA PB</text>
</svg>
<rect x="4" y="848" width="253.5" height="12" fill="#f0f0f0"/>
<rect x="20.5" y="849" width="201" height="11" fill="#cdcdcd"/>
<path d="M14 851.5 L10.5 855 L14 858.5 M248.5 851.5 L252 855 L248.5 858.5" stroke="#555" stroke-width="1.4" fill="none"/>
</svg>


<!-- ===== VIEW ===== -->
<svg class="a" style="left:0;top:0" width="1140" height="860" viewBox="0 0 1140 860" font-family="Liberation Sans" font-size="11">
<defs>
 <linearGradient id="band" x1="0" y1="0" x2="0" y2="1">
  <stop offset="0" stop-color="#4a382c" stop-opacity="0.38"/>
  <stop offset="0.2" stop-color="#4a382c" stop-opacity="0.04"/>
  <stop offset="0.5" stop-color="#8a705a" stop-opacity="0.12"/>
  <stop offset="0.85" stop-color="#4a382c" stop-opacity="0.0"/>
  <stop offset="1" stop-color="#4a382c" stop-opacity="0.22"/>
 </linearGradient>
 <pattern id="tile" x="398.5" y="160" width="26.7" height="26.66" patternUnits="userSpaceOnUse">
  <rect width="26.7" height="26.66" fill="#6b533f"/>
  <rect width="26.7" height="26.66" fill="url(#band)"/>
  <path d="M15.5 5 L19 22" stroke="#4a392d" stroke-width="1.6" opacity="0.28"/>
  <path d="M17 6 L21 22 L25 22 L23 6 Z" fill="#8a715a" opacity="0.2"/>
  <path d="M4 22 L7 6 L11 6 L10 22 Z" fill="#836a55" opacity="0.12"/>
 </pattern>
 <filter id="noise" x="0" y="0" width="100%" height="100%" color-interpolation-filters="sRGB">
  <feTurbulence type="fractalNoise" baseFrequency="0.5" numOctaves="2" seed="7" result="n"/>
  <feColorMatrix in="n" type="matrix" values="0 0 0 0 0.26  0 0 0 0 0.18  0 0 0 0 0.11  2.0 0 0 0 -1.0" result="dark"/>
  <feColorMatrix in="n" type="matrix" values="0 0 0 0 0.60  0 0 0 0 0.47  0 0 0 0 0.34  -2.0 0 0 0 0.9" result="light"/>
  <feMerge result="m"><feMergeNode in="dark"/><feMergeNode in="light"/></feMerge>
  <feGaussianBlur in="m" stdDeviation="0.7"/>
 </filter>
 <radialGradient id="sph" cx="0.62" cy="0.36" r="0.72"><stop offset="0" stop-color="#6577c0"/><stop offset="0.45" stop-color="#43509a"/><stop offset="0.85" stop-color="#232650"/><stop offset="1" stop-color="#1a1a34"/></radialGradient>
 <filter id="soft"><feGaussianBlur stdDeviation="0.6"/></filter>
</defs>
<!-- view tabs -->
<rect x="274" y="127" width="866" height="19" fill="#cdcdcd"/>
<g>
 <path d="M280 137.5 L284.5 132 L290 133.5 L292.5 137 V142.5 L287 144.5 L280.5 143 Z" fill="#e2e2e2" stroke="#888" stroke-width="1"/>
 <path d="M280.5 137.5 L286.5 139 L292.5 137 M286.5 139 V144.5 M284.5 132 L286.5 139" stroke="#888" fill="none"/>
 <rect x="282" y="140" width="2" height="3" fill="#999"/>
</g>
<text x="299.5" y="142.3" fill="#333" textLength="98" lengthAdjust="spacingAndGlyphs" stroke="#333" stroke-width="0.1">Vista 3D 10-COCINA</text>
<rect x="419" y="128" width="116" height="18" fill="#fdfdfd"/>
<rect x="423.5" y="132.5" width="8" height="11" fill="#eee" stroke="#555"/>
<path d="M428.5 134.5 H434 L437 137.5 V144.5 H428.5 Z" fill="#f6f6f6" stroke="#555"/>
<text x="445" y="142.3" fill="#222" font-weight="bold" textLength="34.5" lengthAdjust="spacingAndGlyphs" stroke="#222" stroke-width="0.1">Nivel 1</text>
<path d="M521.5 133.5 L530 142 M530 133.5 L521.5 142" stroke="#222" stroke-width="1.5"/>
<!-- view canvas -->
<rect x="274" y="146" width="866" height="701" fill="#fff"/>
<rect x="408" y="148" width="732" height="699" fill="url(#tile)"/>
<rect x="408" y="148" width="732" height="699" filter="url(#noise)" opacity="0.6"/>
<path d="M378.5 148 V213 M378.5 282 V353 M378.5 422 V700 M378.5 770 V839" stroke="#8c8c8c" stroke-width="1"/>
<path d="M830.5 148 V213 M830.5 282 V353 M830.5 422 V700 M830.5 770 V839" stroke="#cdbfae" stroke-width="1.1"/>
<!-- sofa -->
<g fill="#5570af" stroke="#1f5894" stroke-width="1.1" stroke-linejoin="round">
 <path d="M568 277.7 H700 V373.8 H590.6 V310 H565.8 V280 Q565.8 277.7 568 277.7 Z"/>
 <rect x="573.5" y="274.2" width="72.3" height="30.4" rx="2.5"/>
 <path d="M590.6 373.8 H653.8 V602 H590.6 Z"/>
 <rect x="562.8" y="310.2" width="27.8" height="230.2" rx="2"/>
 <rect x="562.8" y="540.4" width="27.8" height="149.1" rx="2"/>
 <path d="M590.6 602 H776 Q778.4 602 778.4 605 V681.5 Q778.4 684.2 776 684.2 H590.6 Z"/>
 <rect x="598.4" y="662" width="94.3" height="27.5" rx="2.5"/>
</g>
<!-- lamps -->
<g filter="url(#soft)">
<path d="M640 212 L742 314" stroke="#52608c" stroke-width="2.6" opacity="0.8"/>
<rect x="626" y="198.5" width="15" height="14" fill="#4d68b0" stroke="#3b5490" opacity="0.85" transform="rotate(40 633.3 205.5)"/>
<path d="M627 202.5 L637 212.5 M630 199 L640 209" stroke="#34488a" stroke-width="1.2"/>
<circle cx="752.5" cy="324.3" r="14" fill="url(#sph)" stroke="#23234a" stroke-width="1.2"/>
<path d="M742 328 Q745 334 750 333" stroke="#6a7050" stroke-width="1" fill="none" opacity="0.6"/>
<path d="M660 785 L790 725" stroke="#7a84b8" stroke-width="2.4" opacity="0.75"/>
<path d="M656 787 L718 757" stroke="#2a2028" stroke-width="1.2" opacity="0.9"/>
<rect x="643" y="783" width="16" height="15" fill="#5068b8" stroke="#3b5490" opacity="0.8" transform="rotate(-25 651 790.6)"/>
<path d="M649 783 L653 798" stroke="#2f4680" stroke-width="1.4"/>
<circle cx="802.8" cy="720.4" r="14.5" fill="url(#sph)" stroke="#23234a" stroke-width="1.2"/>
<path d="M793 724 Q796 730 801 729" stroke="#6a7050" stroke-width="1" fill="none" opacity="0.6"/>
</g>
<!-- status bar -->
<rect x="274" y="847" width="866" height="13" fill="#efefef"/>
<rect x="1120" y="848" width="15" height="12" fill="#cdcdcd"/>
<text x="297" y="858" fill="#333" textLength="29" lengthAdjust="spacingAndGlyphs" stroke="#333" stroke-width="0.1">1 : 250</text>
<g>
 <rect x="347.5" y="848.5" width="14" height="10" fill="#eee" stroke="#444" stroke-width="1"/>
 <path d="M349 850.5 H360 M349 852.5 H360 M349 854.5 H360 M349 856.5 H360" stroke="#aaa" stroke-dasharray="1 1"/>
 <path d="M367 851 L370 848.5 H380.5 V857 L377.5 860 H367 Z" fill="#7ec4ea" stroke="#2a6a9a"/>
 <rect x="368.5" y="853" width="8" height="2" fill="#6aa860"/><rect x="368.5" y="855" width="8" height="1.5" fill="#c85050"/>
 <circle cx="389" cy="852.5" r="3.5" fill="#f4e070"/>
 <path d="M389 847 V849 M384 852.5 H386 M385.5 849 L386.8 850.3 M392.5 849 L391.2 850.3" stroke="#f0c040"/>
 <path d="M392 855 L397 860 M397 855 L392 860" stroke="#e04040" stroke-width="1.8"/>
 <circle cx="410.5" cy="852" r="4.3" fill="#cfe6f8" stroke="#3a80c0"/>
 <rect x="407" y="857" width="7" height="3" fill="#333"/>
 <path d="M423 860 V851.5 H436 M425.5 860 V854 H436" stroke="#2a70c0" stroke-width="1.3" fill="none"/>
 <rect x="430" y="855" width="5" height="3" fill="#d05a5a"/><path d="M432 848.5 H435" stroke="#333"/>
 <path d="M442 860 V851.5 H452 M444.5 860 V854 H450" stroke="#2a70c0" stroke-width="1.3" fill="none"/>
 <rect x="447" y="855" width="4" height="3" fill="#d05a5a"/>
 <circle cx="453" cy="853.5" r="3" fill="#f4d050"/>
 <path d="M461 852 Q463 849 466 851 M464 856 A3 3 0 1 0 470 856 A3 3 0 1 0 464 856 M470 855 Q472 852 475 856" stroke="#444" stroke-width="1.1" fill="none"/>
 <path d="M484.5 852 A2.7 2.7 0 1 1 489 852 Q488 855 488 857 H485.5 Q485.5 855 484.5 852 Z" fill="#cfe6f8" stroke="#3a80c0"/>
 <rect x="499.5" y="850.5" width="12" height="9" fill="#ddd" stroke="#222"/>
 <path d="M500 848.5 H512" stroke="#222" stroke-dasharray="2 1" stroke-width="1.5"/>
 <circle cx="507" cy="856" r="2.5" fill="#222"/>
 <path d="M518 860 V852 L522 848.5 H530 V860" fill="#e8c0c0" stroke="#555"/>
 <path d="M521 852 V860 M524.5 851 V860" stroke="#aaa"/>
 <circle cx="529" cy="852" r="3" fill="#f4d050"/>
 <path d="M537 848 V852 M550 848 V852 M537 849.5 H550" stroke="#333" stroke-width="1.1"/>
 <path d="M537.5 853 V860" stroke="#999" stroke-dasharray="1.5 1"/>
 <path d="M540 857 H543" stroke="#999"/>
 <path d="M544.5 860 V856 A3.5 3.5 0 0 1 551 856 V860 Z" fill="#777"/>
 <path d="M563.5 849.5 L560 853 L563.5 856.5" stroke="#333" stroke-width="1.4" fill="none"/>
</g>
</svg>

</body></html>
